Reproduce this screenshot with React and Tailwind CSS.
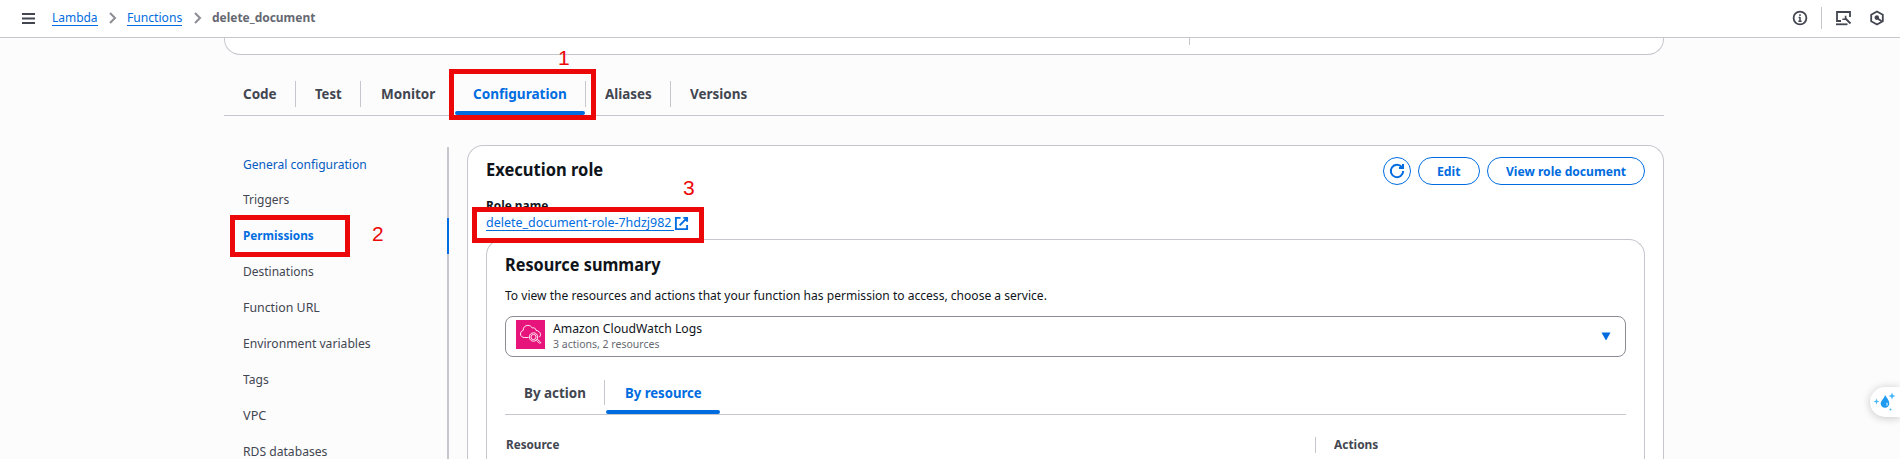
import React, { useLayoutEffect, useRef, useState } from 'react';

// Text condensed horizontally so that it fills exactly `w` pixels.
function Fit({ w, className = '', children }) {
  const ref = useRef(null);
  const [scale, setScale] = useState(0.9);
  useLayoutEffect(() => {
    setScale(w / ref.current.offsetWidth);
  }, [w]);
  return (
    <span className={`block shrink-0 whitespace-nowrap ${className}`} style={{ width: w }}>
      <span ref={ref} className="inline-block origin-left align-top" style={{ transform: `scaleX(${scale})` }}>
        {children}
      </span>
    </span>
  );
}

function Chevron() {
  return (
    <svg className="mt-[5px] h-3 w-2 shrink-0" viewBox="0 0 8 12" fill="none" stroke="#8c8c94" strokeWidth="2">
      <path d="M1 1l5 5-5 5" />
    </svg>
  );
}

function Header() {
  return (
    <header className="flex h-[38px] shrink-0 items-start border-b border-[#c6c6cd] bg-white pt-[7px] text-[13px]">
      <svg className="ml-[22px] mt-[5px] h-3 w-[13px] shrink-0" viewBox="0 0 13 12" stroke="#424650" strokeWidth="2">
        <path d="M0 2h13M0 6.5h13M0 11h13" />
      </svg>
      <Fit w={46} className="ml-[17px] h-[19px] border-b border-[#006ce0] leading-5 text-[#006ce0]">Lambda</Fit>
      <div className="ml-[11px]"><Chevron /></div>
      <Fit w={55} className="ml-[10px] h-[19px] border-b border-[#006ce0] leading-5 text-[#006ce0]">Functions</Fit>
      <div className="ml-3"><Chevron /></div>
      <Fit w={103} className="ml-[9.5px] font-bold leading-5 text-[#656871]">delete_document</Fit>
      <div className="ml-auto flex items-start pr-[15px] text-[#424650]">
        <svg className="mt-[3px] h-4 w-4" viewBox="0 0 16 16" fill="none" stroke="currentColor" strokeWidth="1.8">
          <circle cx="8" cy="8" r="6.4" />
          <path d="M8 7v5M8 4.2v1.8M6.6 7.6H8M6.4 11.3h3.2" strokeWidth="1.5" />
        </svg>
        <div className="ml-[13px] h-[22px] w-px bg-[#c6c6cd]" />
        <svg className="ml-[13px] mt-[3px] h-4 w-[18px]" viewBox="0 0 18 16" fill="none" stroke="currentColor" strokeWidth="1.8">
          <path d="M6 11H2V2h13v5" />
          <path d="M1 14.3h11.5" />
          <path d="M10.500 8.500l5 5" />
          <path d="M7.400 9.200h3.200V5.800" strokeWidth="1.600" />
        </svg>
        <svg className="ml-4 mt-[3px] h-4 w-4" viewBox="0 0 16 16" fill="none" stroke="currentColor" strokeWidth="1.8">
          <path d="M8 1.500l5.800 3.200v6.600L8 14.500l-5.800-3.200V4.700z" />
          <path d="M8 8l4.600 3.200" />
          <circle cx="7.800" cy="7.600" r="1.400" fill="currentColor" />
        </svg>
      </div>
    </header>
  );
}

const tabs = [
  { label: 'Code', w: 33.5, cell: 'w-[72px] pl-[19px]', line: true },
  { label: 'Test', w: 27, cell: 'w-[65px] pl-[19px]', line: true },
  { label: 'Monitor', w: 54, cell: 'w-[93px] pl-[20px]' },
  { label: 'Configuration', w: 93.5, cell: 'w-[132px] pl-[19px]', line: true, active: true },
  { label: 'Aliases', w: 47, cell: 'w-[85px] pl-[19px]', line: true },
  { label: 'Versions', w: 57.5, cell: 'w-[90px] pl-[19px]' },
];

function Tabs() {
  return (
    <nav className="mt-[26px] flex h-[35px] border-b border-[#c6c6cd] text-[14.5px] font-bold text-[#424650]">
      {tabs.map((t) => (
        <div key={t.label} className={`flex h-[34px] flex-col ${t.cell}`}>
          <div className={`flex h-[26px] justify-between ${t.active ? 'text-[#006ce0]' : ''}`}>
            <Fit w={t.w} className="mt-[2px] leading-5">{t.label}</Fit>
            {t.line && <div className="w-px bg-[#c6c6cd]" />}
          </div>
          {t.active && <div className="-ml-[18px] mr-px mt-1 h-1 rounded-[2px] bg-[#006ce0]" />}
        </div>
      ))}
    </nav>
  );
}

const links = [
  ['General configuration', 124, 'h-[35px] text-[#045bc0]'],
  ['Triggers', 46, 'h-9'],
  ['Permissions', 70.5, 'h-9 font-bold text-[#006ce0]'],
  ['Destinations', 71, 'h-9'],
  ['Function URL', 77, 'h-9'],
  ['Environment variables', 128, 'h-9'],
  ['Tags', 26, 'h-9'],
  ['VPC', 23.5, 'h-9'],
  ['RDS databases', 84, 'h-5'],
];

function SideNav() {
  return (
    <aside className="flex w-[225px] shrink-0">
      <div className="flex-1 pl-[19px] pt-[7px] text-[13px] leading-5 text-[#424650]">
        {links.map(([label, w, cls]) => (
          <div key={label} className={cls}><Fit w={w}>{label}</Fit></div>
        ))}
      </div>
      <div className="h-[340px] w-[2px] bg-[#c6c6cd] pt-[71px]">
        <div className="h-9 bg-[#006ce0]" />
      </div>
    </aside>
  );
}

function Button({ w, className, children }) {
  return (
    <button className={`flex h-7 items-center justify-center rounded-full border border-[#006ce0] pb-px text-[13px] font-bold leading-5 text-[#006ce0] ${className}`}>
      {w ? <Fit w={w}>{children}</Fit> : children}
    </button>
  );
}

function ResourceSummary() {
  return (
    <section className="ml-[18px] mr-[18px] h-[240px] rounded-t-2xl border border-b-0 border-[#c6c6cd] px-[18px] pt-3 text-[#0f141a]">
      <Fit w={155.5} className="text-[17.5px] font-bold leading-6">Resource summary</Fit>
      <Fit w={542} className="mt-[9px] text-[13px] leading-5">
        To view the resources and actions that your function has permission to access, choose a service.
      </Fit>
      <div className="mt-[11px] flex h-[41px] items-start rounded-lg border border-[#8c8c94] bg-white pl-[10px] pt-[3px]">
        <svg className="h-[29px] w-[29px] shrink-0" viewBox="0 0 29 29" fill="none" stroke="#fff" strokeWidth="0.9">
          <rect width="29" height="29" fill="#e7157b" stroke="none" />
          <path d="M12.500 17.500H8.200c-2.300-.3-3.700-1.400-3.700-3.500 0-1.800 1-3.100 2.700-3.600-.2-3.100 2-5 4.700-5 2 0 3.600 1 4.400 2.700 1.600-.9 3.500.1 3.700 2.300 2.400.3 4.400 1.700 4.500 4 .1 1.200-.4 2-1.200 2.700" />
          <circle cx="17.500" cy="17" r="4.200" />
          <circle cx="17.500" cy="17" r="2.600" />
          <path d="M20.300 20.200l3 2.900c.9.700 1.900-.4 1.100-1.200l-3.200-2.700" />
        </svg>
        <div className="ml-[7.5px]">
          <Fit w={149} className="-mt-[2px] text-[13px] leading-5">Amazon CloudWatch Logs</Fit>
          <Fit w={106} className="-mt-[2px] text-[11.5px] leading-4 text-[#656871]">3 actions, 2 resources</Fit>
        </div>
        <svg className="ml-auto mr-[14px] mt-[12px] h-2 w-[10px]" viewBox="0 0 10 8" fill="#006ce0">
          <path d="M.500 .500h9L5.300 8h-.6z" />
        </svg>
      </div>
      <div className="mt-[23px] flex h-[35px] border-b border-[#c6c6cd] text-[14.5px] font-bold leading-5 text-[#424650]">
        <div className="flex h-[25px] w-[100px] justify-between pl-[19px]">
          <Fit w={62} className="mt-[2px]">By action</Fit>
          <div className="w-px bg-[#c6c6cd]" />
        </div>
        <div className="ml-px w-[114px] pl-[19px] text-[#006ce0]">
          <Fit w={77} className="mt-[2px]">By resource</Fit>
          <div className="-ml-[19px] mt-[8px] h-1 rounded-[2px] bg-[#006ce0]" />
        </div>
      </div>
      <div className="mt-[19px] flex text-[13px] font-bold leading-5 text-[#424650]">
        <Fit w={53} className="ml-px">Resource</Fit>
        <div className="ml-[756px] mt-[3px] h-4 w-px bg-[#c6c6cd]" />
        <Fit w={44} className="ml-[18px]">Actions</Fit>
      </div>
    </section>
  );
}

function ExecutionRole() {
  return (
    <section className="ml-[18px] -mt-[2px] h-[330px] w-[1197px] rounded-t-2xl border border-b-0 border-[#c6c6cd] bg-white">
      <div className="flex h-12 items-start pl-[18px] pr-[18px] pt-[11px]">
        <Fit w={117} className="text-[17.5px] font-bold leading-6 text-[#0f141a]">Execution role</Fit>
        <div className="ml-auto flex gap-[7px]">
          <Button className="w-7">
            <svg className="h-4 w-4 shrink-0" viewBox="0 0 16 16" fill="none" stroke="currentColor" strokeWidth="2">
              <path d="M14.200 8A6.200 6.200 0 1 1 12.800 4" />
              <path d="M10 5h4V1" />
            </svg>
          </Button>
          <Button w={23.5} className="w-[62px]">Edit</Button>
          <Button w={120} className="w-[158px]">View role document</Button>
        </div>
      </div>
      <div className="h-[45px] pl-[18px] pt-px text-[13px]">
        <Fit w={62} className="font-bold leading-5 text-[#0f141a]">Role name</Fit>
        <div className="-mt-[2px] flex items-start text-[#006ce0]">
          <div className="h-[18px] w-[188px] border-b border-[#006ce0] leading-[19px]">
            <Fit w={185}>delete_document-role-7hdzj982</Fit>
          </div>
          <svg className="mt-[3px] h-[15px] w-[15px]" viewBox="0 0 16 16" fill="none" stroke="currentColor" strokeWidth="2">
            <path d="M10 2h4v4M6 10l8-8M14 9.500V14H2V2h5" />
          </svg>
        </div>
      </div>
      <ResourceSummary />
    </section>
  );
}

function Annotations() {
  return (
    <div className='pointer-events-none absolute inset-0 font-["Liberation_Sans",Arial,sans-serif] text-[21px] leading-5 text-[#ec0808]'>
      <div className="absolute left-[449px] top-[69px] h-[51px] w-[147px] border-[5px] border-[#ec0808]" />
      <div className="absolute left-[230px] top-[215px] h-[42px] w-[120px] border-[5px] border-[#ec0808]" />
      <div className="absolute left-[472px] top-[207px] h-9 w-[232px] border-[5px] border-[#ec0808]" />
      <span className="absolute left-[558px] top-[48px]">1</span>
      <span className="absolute left-[372px] top-[224px]">2</span>
      <span className="absolute left-[683px] top-[178px]">3</span>
    </div>
  );
}

function AssistantButton() {
  return (
    <div className="absolute left-[1870px] top-[387px] flex h-[30px] w-[30px] items-center rounded-l-full bg-white pl-1 shadow-[0_1px_8px_rgba(0,0,0,0.22)]">
      <svg className="h-5 w-[22px] shrink-0" viewBox="0 0 22 20" fill="#1e9bf0">
        <path d="M11 3c2 3 4.300 5.500 4.300 8.500a4.300 4.300 0 0 1-8.600 0C6.700 8.500 10.300 6.500 11 3z" />
        <path d="M12.600 10.500c1.200 0 1.800 1 1.300 2.600-.3.900-1.300 1.100-1.500.3-.2-.9-.5-2.500.2-2.900z" fill="#9bd4fb" />
        <path d="M18 .5l1 2.500 2.500 1-2.500 1-1 2.500-1-2.500-2.500-1 2.500-1zM2.500 6.500l.8 2.200 2.200.8-2.200.8-.8 2.200-.8-2.200-2.200-.8 2.200-.8zM16.500 16l.5 1 1 .5-1 .5-.5 1-.5-1-1-.5 1-.5z" fill="#4ab8f7" />
      </svg>
    </div>
  );
}

export default function App() {
  return (
    <div className='relative flex h-[459px] w-[1900px] flex-col overflow-hidden bg-[#fcfcfd] font-["Noto_Sans","Open_Sans",sans-serif]'>
      <Header />
      <main className="ml-[224px] w-[1440px]">
        <div className="h-[17px] rounded-b-2xl border border-t-0 border-[#c6c6cd] bg-white">
          <div className="ml-[964px] h-[7px] w-px bg-[#c6c6cd]" />
        </div>
        <Tabs />
        <div className="mt-[31px] flex">
          <SideNav />
          <ExecutionRole />
        </div>
      </main>
      <Annotations />
      <AssistantButton />
    </div>
  );
}
